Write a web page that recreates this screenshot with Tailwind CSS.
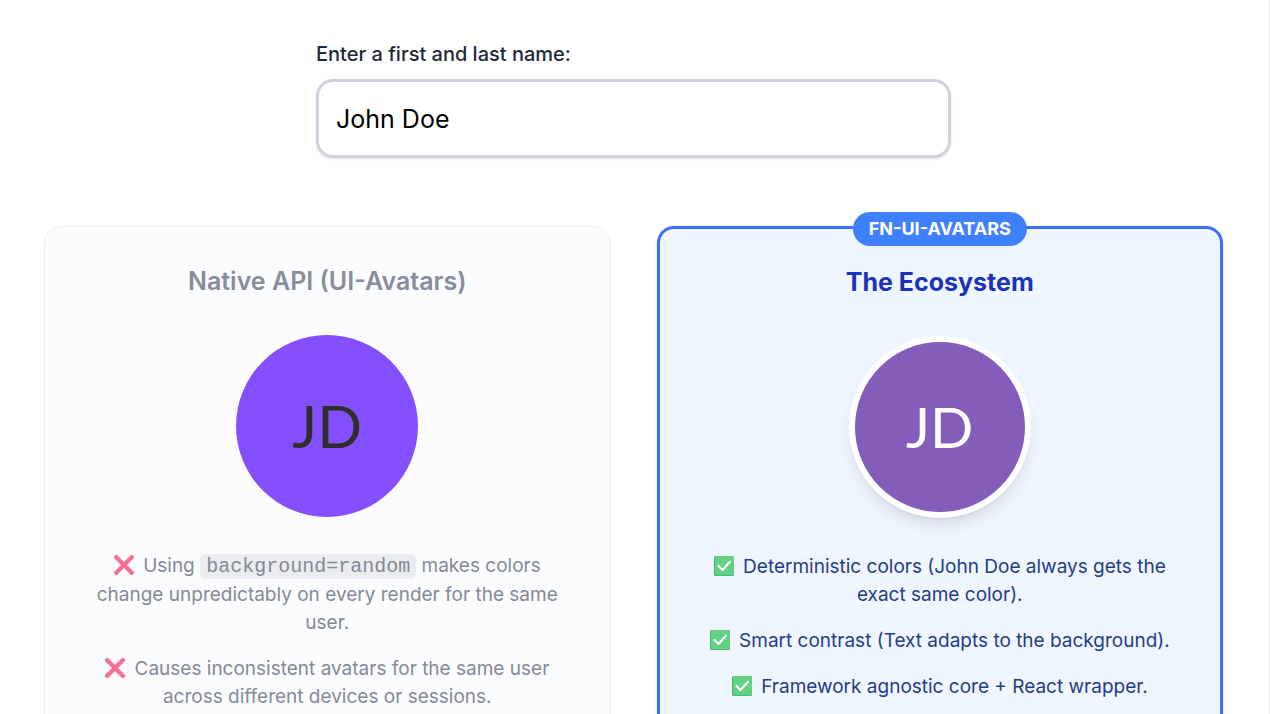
<!DOCTYPE html>
<html lang="en">
  <head>
    <meta charset="UTF-8" />
    <meta name="viewport" content="width=device-width, initial-scale=1.0" />
    <title>fn-ui-avatars</title>
    <script src="https://cdn.jsdelivr.net/npm/@tailwindcss/browser@4"></script>
  </head>
  <body class="bg-white font-['Inter',sans-serif]">
    <!-- icons shared by the two lists -->
    <svg class="hidden">
      <symbol id="cross" viewBox="0 0 20 20">
        <path d="M2.2 2.2 17.8 17.8M17.8 2.2 2.2 17.8" fill="none" stroke="#f96f91" stroke-width="4.4" stroke-linecap="round" />
      </symbol>
      <symbol id="check" viewBox="0 0 20 20">
        <rect width="20" height="20" rx="1.5" fill="#4fb477" />
        <rect x="1" width="19" height="19" rx="1.5" fill="#62d184" />
        <path d="m4.5 10 4 4L16 5.8" fill="none" stroke="#fff" stroke-width="2.2" stroke-linecap="round" />
      </symbol>
    </svg>

    <main class="min-h-screen border-r border-gray-200 pt-10 pr-[46px] pb-8 pl-11">
      <div class="mx-auto w-[635px] max-w-full">
        <label for="name" class="block text-[20px] leading-7 font-medium text-[#1e2939]">Enter a first and last name:</label>
        <input
          id="name"
          type="text"
          value="John Doe"
          class="mt-[11px] block h-[79px] w-full rounded-[17px] border-[3px] border-[#d0d2dd] bg-white px-[17px] text-[25px] text-black shadow-sm outline-none"
        />
      </div>

      <div class="mt-[68px] grid grid-cols-2 gap-[46px]">
        <section class="flex flex-col items-center rounded-[17px] border border-[#ebedf0] bg-[#fbfcfe] px-[46px] pt-9 pb-11 text-center">
          <h2 class="text-[25px] leading-9 font-semibold text-[#888c9b]">Native API (UI-Avatars)</h2>
          <div class="mt-9 flex size-[182px] items-center justify-center rounded-full bg-[#844fff] font-['Lato',sans-serif] text-[59px] text-[#2f2e2b]">JD</div>
          <ul class="mt-[35px] flex flex-col gap-[18px] text-[19px] leading-7 text-[#858996]">
            <li>
              <svg class="mr-1 inline size-5 align-[-3px]"><use href="#cross" /></svg>
              Using
              <code class="rounded-[5px] bg-[#ebedf0] px-[6px] py-px font-['Liberation_Mono',monospace] text-[20px]">background=random</code>
              makes colors change unpredictably on every render for the same user.
            </li>
            <li>
              <svg class="mr-1 inline size-5 align-[-3px]"><use href="#cross" /></svg>
              Causes inconsistent avatars for the same user across different devices or sessions.
            </li>
          </ul>
        </section>

        <section class="relative flex flex-col items-center rounded-[17px] border-[3px] border-[#3f6ff5] bg-[#f0f6ff] px-11 pt-[35px] pb-11 text-center shadow-md">
          <span class="absolute -top-[17px] left-1/2 -translate-x-1/2 rounded-full bg-[#3f80ff] px-4 text-[18px] leading-[34px] font-bold whitespace-nowrap text-white">FN-UI-AVATARS</span>
          <h2 class="text-[25px] leading-9 font-bold text-[#1d32b8]">The Ecosystem</h2>
          <div class="mt-9 flex size-[182px] items-center justify-center rounded-full border-[6px] border-white bg-[#845cba] font-['Lato',sans-serif] text-[57px] text-white shadow-lg">JD</div>
          <ul class="mt-[35px] flex flex-col gap-[18px] text-[19px] leading-7 text-[#263b87]">
            <li>
              <svg class="mr-1 inline size-5 align-[-3px]"><use href="#check" /></svg>
              Deterministic colors (John Doe always gets the exact same color).
            </li>
            <li>
              <svg class="mr-1 inline size-5 align-[-3px]"><use href="#check" /></svg>
              Smart contrast (Text adapts to the background).
            </li>
            <li>
              <svg class="mr-1 inline size-5 align-[-3px]"><use href="#check" /></svg>
              Framework agnostic core + React wrapper.
            </li>
          </ul>
        </section>
      </div>
    </main>
  </body>
</html>
